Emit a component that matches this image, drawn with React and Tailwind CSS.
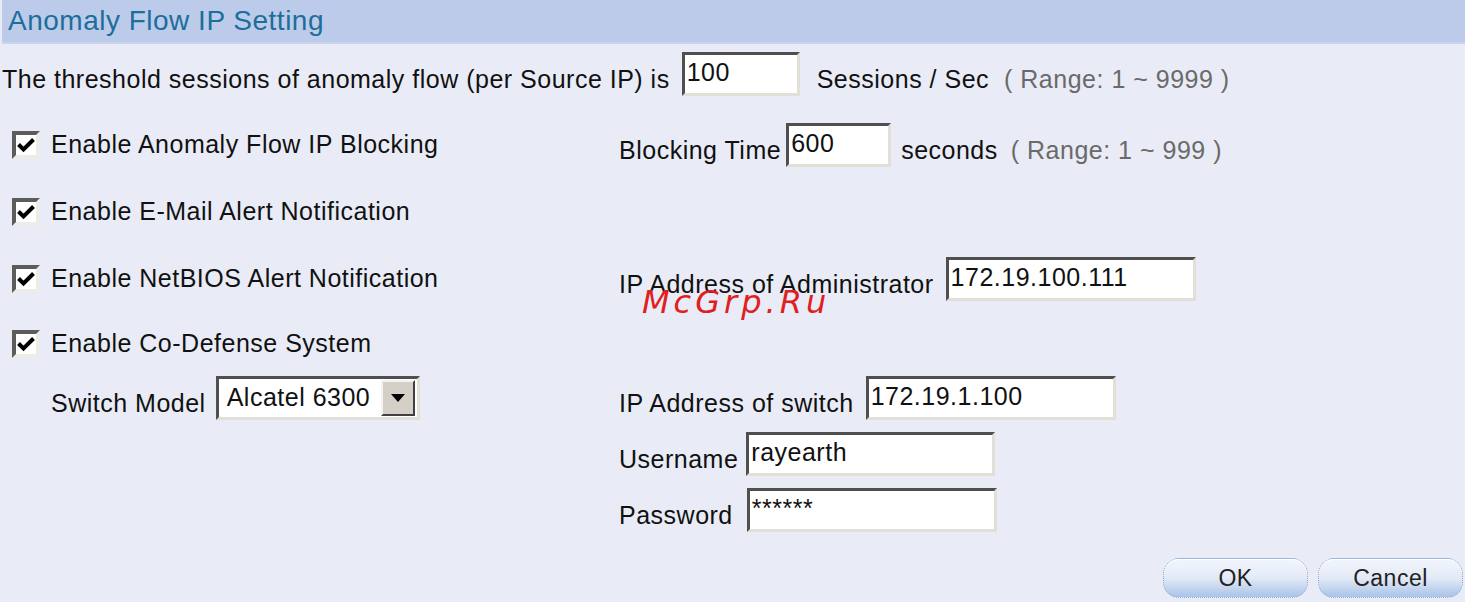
// Anomaly Flow IP Setting — old router admin form, recreated with flow layout.
const FONT = { fontFamily: '"Liberation Sans", Arial, sans-serif' }

function Inset({ className = '', children }) {
  return (
    <div
      className={`box-border h-[44px] border-[3px] border-t-[#4f4f4f] border-l-[#4f4f4f] border-b-[#e2dfd6] border-r-[#e2dfd6] bg-white pl-[2px] pt-[3px] text-[25px] leading-[1.15] text-[#111] ${className}`}
    >
      {children}
    </div>
  )
}

function Check({ label }) {
  return (
    <div className="flex items-center pl-[12px]">
      <div className="box-border grid h-[28px] w-[28px] place-items-center border-4 border-t-[#5c5c5c] border-l-[#5c5c5c] border-b-[#eeece6] border-r-[#eeece6] bg-white">
        <svg viewBox="0 0 18 16" className="h-[16px] w-[18px]">
          <path d="M1.5 7.5 L6.5 12.5 L16.5 2.5" fill="none" stroke="#000" strokeWidth="4" strokeLinejoin="miter" />
        </svg>
      </div>
      <span className="ml-[11px]">{label}</span>
    </div>
  )
}

function Label({ children, className = '' }) {
  return <span className={`mt-3 ${className}`}>{children}</span>
}

function Btn({ children }) {
  return (
    <button className="h-[40px] w-[145px] rounded-[16px] border border-dotted border-[#8fa9d4] bg-gradient-to-b from-[#f2f5fc] via-[#e3eaf7] to-[#a9c3e7] text-[23px] text-[#222] shadow-[inset_0_1px_0_#fff]">
      {children}
    </button>
  )
}

export default function App() {
  return (
    <div className="relative h-[602px] w-[1465px] overflow-hidden bg-[#e9ecf6] text-[25px] tracking-[0.5px] text-[#111]" style={FONT}>
      <div className="ml-[2px] flex h-[44px] items-center border-b-2 border-[#c9d5ef] bg-[#bccbea] pl-[6px] text-[28px] text-[#1c6e9b]">
        Anomaly Flow IP Setting
      </div>

      <div className="mt-[8px] flex h-[44px] items-center pl-[2px]">
        <Label className="mt-2">The threshold sessions of anomaly flow (per Source IP) is</Label>
        <Inset className="ml-[12px] w-[118px]">100</Inset>
        <Label className="ml-[17px] mt-2">Sessions / Sec</Label>
        <Label className="ml-[15px] mt-2 text-[#6a6a6a]">( Range: 1 ~ 9999 )</Label>
      </div>

      <div className="mt-[16px] grid grid-cols-[619px_1fr]">
        <div className="flex h-[66px] items-center"><Check label="Enable Anomaly Flow IP Blocking" /></div>
        <div className="flex h-[66px] items-center">
          <Label>Blocking Time</Label>
          <Inset className="ml-[5px] w-[105px]">600</Inset>
          <Label className="ml-[10px]">seconds</Label>
          <Label className="ml-[13px] text-[#6a6a6a]">( Range: 1 ~ 999 )</Label>
        </div>

        <div className="flex h-[68px] items-center"><Check label="Enable E-Mail Alert Notification" /></div>
        <div />

        <div className="flex h-[66px] items-center"><Check label="Enable NetBIOS Alert Notification" /></div>
        <div className="flex h-[66px] items-center">
          <Label>IP Address of Administrator</Label>
          <Inset className="ml-[12px] w-[250px]">172.19.100.111</Inset>
        </div>

        <div className="flex h-[64px] items-center"><Check label="Enable Co-Defense System" /></div>
        <div />

        <div className="flex h-[44px] items-center pl-[51px]">
          <Label>Switch Model</Label>
          <div className="ml-[10px] box-border flex h-[44px] w-[204px] items-center border-[3px] border-t-[#4f4f4f] border-l-[#4f4f4f] border-b-[#e2dfd6] border-r-[#e2dfd6] bg-white pl-[8px]">
            <span className="flex-1">Alcatel 6300</span>
            <div className="mr-[2px] box-border grid h-[36px] w-[34px] place-items-center border-2 border-t-[#f4f3ef] border-l-[#f4f3ef] border-b-[#404040] border-r-[#404040] bg-[#d4d0c8]">
              <svg viewBox="0 0 14 8" className="h-[8px] w-[14px]"><path d="M0 0 H14 L7 8 Z" fill="#000" /></svg>
            </div>
          </div>
        </div>
        <div className="flex h-[44px] items-center">
          <Label>IP Address of switch</Label>
          <Inset className="ml-[12px] w-[250px]">172.19.1.100</Inset>
        </div>

        <div />
        <div className="mt-[12px] flex h-[44px] items-center">
          <Label>Username</Label>
          <Inset className="ml-[8px] w-[249px]">rayearth</Inset>
        </div>

        <div />
        <div className="mt-[12px] flex h-[44px] items-center">
          <Label>Password</Label>
          <Inset className="ml-[14px] w-[250px]">******</Inset>
        </div>
      </div>

      <div className="mt-[26px] flex justify-end gap-[10px] pr-[2px]">
        <Btn>OK</Btn>
        <Btn>Cancel</Btn>
      </div>

      <span
        className="pointer-events-none absolute left-[642px] top-[286px] text-[32px] italic leading-none tracking-[4px] text-[#e0201f]"
        style={{ fontFamily: '"DejaVu Sans", Verdana, sans-serif' }}
      >
        McGrp.Ru
      </span>
    </div>
  )
}
